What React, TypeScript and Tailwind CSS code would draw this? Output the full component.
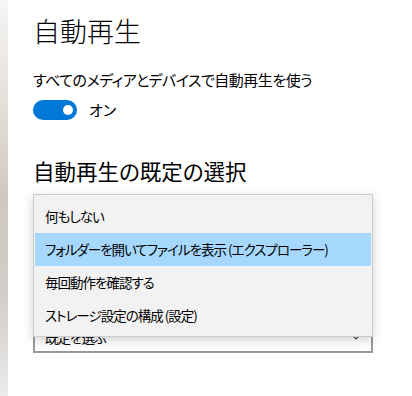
const items = [
  "何もしない",
  "フォルダーを開いてファイルを表示 (エクスプローラー)",
  "毎回動作を確認する",
  "ストレージ設定の構成 (設定)",
];

export default function App() {
  return (
    <div className="flex h-[396px] w-[412px] overflow-hidden bg-white font-['Noto_Sans_CJK_JP',sans-serif] text-black [font-feature-settings:'palt']">
      {/* acrylic edge of the nav pane */}
      <div className="h-full w-[8px] shrink-0 bg-[linear-gradient(180deg,#f5f5f5_0%,#e6e0da_25%,#cfc8c1_50%,#d2cdc8_75%,#ebebeb_100%)]" />

      <main className="relative flex-1 pl-[25px] pt-[13px]">
        <h1 className="text-[27px] font-light leading-[36px]">自動再生</h1>

        <p className="mt-[21px] text-[15px] leading-[20px] tracking-[-0.5px]">
          すべてのメディアとデバイスで自動再生を使う
        </p>

        <div className="mt-[10px] flex h-[20px] items-center gap-[12px]">
          <button
            role="switch"
            aria-checked="true"
            className="flex h-[20px] w-[44px] items-center justify-end rounded-full bg-[#0078d7] pr-[4px]"
          >
            <span className="h-[10px] w-[10px] rounded-full bg-white" />
          </button>
          <span className="text-[15px] leading-[20px]">オン</span>
        </div>

        <h2 className="mt-[37px] text-[21.5px] leading-[28px]">
          自動再生の既定の選択
        </h2>

        {/* combobox partly hidden under the open list */}
        <div className="mt-[136px] flex h-[32px] w-[340px] items-center justify-between border-2 border-[#999999] bg-white pl-[10px] pr-[10px]">
          <span className="text-[13.5px] leading-[20px] tracking-[-1px]">既定を選ぶ</span>
          <svg width="10" height="6" viewBox="0 0 10 6" fill="none">
            <path d="M1 1l4 4 4-4" stroke="#555" strokeWidth="1.2" />
          </svg>
        </div>

        {/* open dropdown list */}
        <ul className="absolute left-[25px] top-[194px] w-[340px] border border-[#cccccc] bg-[#f2f2f2] pb-[4px] pt-[5px] shadow-[0_3px_10px_rgba(0,0,0,0.18)]">
          {items.map((label, i) => (
            <li
              key={label}
              className={
                i === 1
                  ? "mx-[1px] flex h-[33px] items-center whitespace-nowrap bg-[#a6d7fd] px-[10px] text-[13.5px] tracking-[-1px]"
                  : "mx-[1px] flex h-[33px] items-center whitespace-nowrap px-[10px] text-[13.5px] tracking-[-1px]"
              }
            >
              {label}
            </li>
          ))}
        </ul>
      </main>
    </div>
  );
}
